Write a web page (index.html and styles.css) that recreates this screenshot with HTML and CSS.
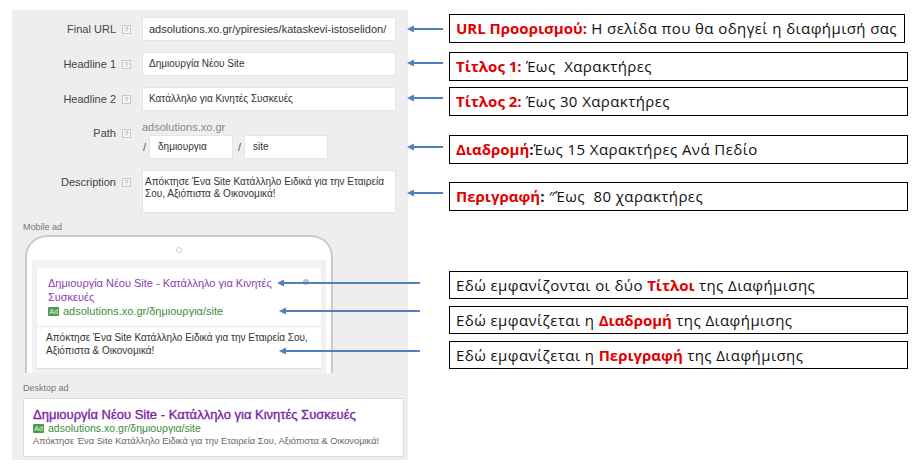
FILE: index.html
```html
<!DOCTYPE html>
<html lang="el">
<head>
<meta charset="utf-8">
<title>Expanded text ad</title>
<link rel="stylesheet" href="styles.css">
</head>
<body>
<div class="page">
  <section class="editor">
    <div class="row">
      <div class="lbl">Final URL</div><span class="help">?</span>
      <div class="field url">adsolutions.xo.gr/ypiresies/kataskevi-istoselidon/</div>
    </div>
    <div class="row">
      <div class="lbl">Headline 1</div><span class="help">?</span>
      <div class="field">Δημιουργία Νέου Site</div>
    </div>
    <div class="row">
      <div class="lbl">Headline 2</div><span class="help">?</span>
      <div class="field">Κατάλληλο για Κινητές Συσκευές</div>
    </div>
    <div class="row row-path">
      <div class="lbl">Path</div><span class="help">?</span>
      <div class="path">
        <div class="domain">adsolutions.xo.gr</div>
        <div class="path-parts">
          <span class="slash">/</span>
          <div class="field part">δημιουργια</div>
          <span class="slash slash-2">/</span>
          <div class="field part">site</div>
        </div>
      </div>
    </div>
    <div class="row">
      <div class="lbl">Description</div><span class="help">?</span>
      <div class="field area">Απόκτησε Ένα Site Κατάλληλο Ειδικά για την Εταιρεία Σου, Αξιόπιστα &amp; Οικονομικά!</div>
    </div>

    <div class="sub">Mobile ad</div>
    <div class="phone">
      <div class="camera"></div>
      <div class="screen">
        <div class="m-card">
          <div class="m-top">
            <div class="m-head">
              <div class="m-title">Δημιουργία Νέου Site - Κατάλληλο για Κινητές Συσκευές</div>
              <span class="info"></span>
            </div>
            <div class="ad-url"><span class="badge">Ad</span>adsolutions.xo.gr/δημιουργια/site</div>
          </div>
          <div class="m-desc">Απόκτησε Ένα Site Κατάλληλο Ειδικά για την Εταιρεία Σου, Αξιόπιστα &amp; Οικονομικά!</div>
        </div>
      </div>
    </div>

    <div class="sub sub-desktop">Desktop ad</div>
    <div class="d-card">
      <div class="d-title">Δημιουργία Νέου Site - Κατάλληλο για Κινητές Συσκευές</div>
      <div class="ad-url d-url"><span class="badge">Ad</span>adsolutions.xo.gr/δημιουργια/site</div>
      <div class="d-desc">Απόκτησε Ένα Site Κατάλληλο Ειδικά για την Εταιρεία Σου, Αξιόπιστα &amp; Οικονομικά!</div>
    </div>
  </section>

  <aside class="notes">
    <div class="note note-first"><b>URL Προορισμού:</b> Η σελίδα που θα οδηγεί η διαφήμισή σας</div>
    <div class="note gap-9"><b>Τίτλος 1:</b> Έως&nbsp; Χαρακτήρες</div>
    <div class="note gap-6"><b>Τίτλος 2:</b> Έως 30 Χαρακτήρες</div>
    <div class="note gap-19"><b>Διαδρομή</b><b class="ink">:</b>Έως 15 Χαρακτήρες Ανά Πεδίο</div>
    <div class="note gap-18"><b>Περιγραφή</b><b class="ink">:</b> ″Έως&nbsp; 80 χαρακτήρες</div>
    <div class="note gap-60">Εδώ εμφανίζονται οι δύο <b>Τίτλοι</b> της Διαφήμισης</div>
    <div class="note gap-7">Εδώ εμφανίζεται η <b>Διαδρομή</b> της Διαφήμισης</div>
    <div class="note gap-7">Εδώ εμφανίζεται η <b>Περιγραφή</b> της Διαφήμισης</div>
  </aside>

  <svg class="arrows" viewBox="0 0 920 468" aria-hidden="true">
    <g stroke="#4f81bd" stroke-width="2" fill="none">
      <path d="M412 29H443M412 63H443M412 98H443M412 147H443M412 193H443"/>
      <path d="M282 283H420M284 311H420M284 351H420"/>
    </g>
    <g fill="#4f81bd">
      <path d="M407 29l7-3.5v7z"/>
      <path d="M407 63l7-3.5v7z"/>
      <path d="M407 98l7-3.5v7z"/>
      <path d="M407 147l7-3.5v7z"/>
      <path d="M407 193l7-3.5v7z"/>
      <path d="M277 283l7-3.5v7z"/>
      <path d="M279 311l7-3.5v7z"/>
      <path d="M279 351l7-3.5v7z"/>
    </g>
  </svg>
</div>
</body>
</html>
```

FILE: styles.css
```css
body {
  margin: 0;
  background: #ffffff;
  font-family: "Liberation Sans", Arial, sans-serif;
}

.page {
  position: relative;
  width: 920px;
  height: 468px;
  display: flex;
  align-items: flex-start;
}

/* ---------- ad editor panel ---------- */
.editor {
  margin: 10px 0 0 12px;
  width: 396px;
  height: 450px;
  box-sizing: border-box;
  padding-top: 7px;
  background: #eeeeee;
  display: flex;
  flex-direction: column;
}

.row {
  display: flex;
  align-items: flex-start;
  margin-bottom: 11px;
}
.row-path { margin-top: -1px; }

.lbl {
  width: 104px;
  margin-right: 2px;
  text-align: right;
  font-size: 11px;
  line-height: 24px;
  color: #444444;
}

.help {
  flex: none;
  width: 9px;
  height: 9px;
  box-sizing: border-box;
  margin: 8px 11px 0 4px;
  border: 1px solid #c9c9c9;
  background: #f5f5f5;
  color: #9a9a9a;
  font-size: 7px;
  line-height: 7px;
  text-align: center;
}

.field {
  width: 254px;
  height: 24px;
  box-sizing: border-box;
  padding: 0 6px;
  background: #ffffff;
  border: 1px solid #e4e4e4;
  font-size: 10px;
  line-height: 22px;
  color: #333333;
  white-space: nowrap;
  overflow: hidden;
}
.field.url { font-size: 11px; }

.path { display: flex; flex-direction: column; }
.domain {
  font-size: 11px;
  line-height: 13px;
  color: #8a8a8a;
  margin-bottom: 1px;
}
.path-parts { display: flex; align-items: center; }
.slash {
  width: 6px;
  padding-left: 1px;
  font-size: 11px;
  color: #555555;
}
.slash-2 { width: 6px; padding-left: 5px; }
.field.part { width: 84px; padding: 0 8px; }

.field.area {
  height: 43px;
  padding: 5px 2px 0;
  line-height: 12px;
  white-space: normal;
}

.sub {
  margin: -2px 0 0 11px;
  font-size: 9px;
  line-height: 10px;
  color: #777777;
}
.sub-desktop { margin-top: 10px; }

/* ---------- mobile preview ---------- */
.phone {
  margin: 3px 0 0 13px;
  width: 308px;
  height: 138px;
  box-sizing: border-box;
  border: 2px solid #cacaca;
  border-bottom: none;
  border-radius: 22px 22px 0 0;
  background: #ffffff;
  overflow: hidden;
}

.camera {
  width: 6px;
  height: 6px;
  box-sizing: border-box;
  margin: 10px auto 7px;
  border: 1px solid #cfcfcf;
  border-radius: 50%;
}

.screen {
  margin: 0 5px;
  padding: 8px 5px 5px;
  background: #f1f1f1;
}

.m-card {
  background: #ffffff;
  box-shadow: 0 1px 1px rgba(0, 0, 0, 0.08);
}

.m-top {
  padding: 8px 11px 8px 11px;
  border-bottom: 1px solid #e9e9e9;
}

.m-head { display: flex; align-items: flex-start; justify-content: space-between; }

.m-title {
  width: 240px;
  font-size: 11px;
  line-height: 14px;
  color: #8b3db5;
}

.info {
  flex: none;
  width: 6px;
  height: 6px;
  margin: 3px 1px 0 0;
  border-radius: 50%;
  background: #bdbdbd;
}

.ad-url {
  display: flex;
  align-items: center;
  font-size: 11px;
  line-height: 14px;
  color: #3d8b3d;
}

.badge {
  display: inline-block;
  width: 11px;
  height: 9px;
  margin-right: 4px;
  border-radius: 1px;
  background: #4c9a4c;
  color: #e9f5e9;
  font-size: 7px;
  line-height: 9px;
  text-align: center;
}

.m-desc {
  padding: 4px 4px 11px 9px;
  font-size: 10px;
  line-height: 13px;
  color: #333333;
}

/* ---------- desktop preview ---------- */
.d-card {
  margin: 5px 0 0 11px;
  width: 381px;
  height: 59px;
  box-sizing: border-box;
  padding: 8px 9px 0;
  background: #ffffff;
  border: 1px solid #dedede;
}

.d-title {
  font-size: 13px;
  line-height: 15px;
  color: #7a24a6;
  -webkit-text-stroke: 0.35px #7a24a6;
  white-space: nowrap;
}

.d-url { line-height: 13px; font-size: 10.5px; }

.d-desc {
  font-size: 9.3px;
  line-height: 12px;
  color: #666666;
  white-space: nowrap;
}

/* ---------- explanation boxes ---------- */
.notes {
  margin-left: 41px;
  padding-top: 14px;
  display: flex;
  flex-direction: column;
}

.note {
  width: 459px;
  height: 29px;
  box-sizing: border-box;
  padding-left: 6px;
  border: 1px solid #000000;
  background: #ffffff;
  font-family: "Open Sans", "Noto Sans", sans-serif;
  font-size: 15px;
  line-height: 27px;
  letter-spacing: 0.42px;
  color: #111111;
  white-space: nowrap;
}
.note b { color: #e00000; font-weight: 700; letter-spacing: 0; }
.note b.ink { color: #111111; }
.note-first { width: 456px; margin-left: 0; }

.gap-6 { margin-top: 6px; }
.gap-7 { margin-top: 7px; height: 28px; line-height: 26px; }
.gap-9 { margin-top: 9px; }
.gap-18 { margin-top: 18px; }
.gap-19 { margin-top: 19px; }
.gap-60 { margin-top: 60px; height: 28px; line-height: 26px; }

/* connector arrows drawn over both columns */
.arrows {
  position: absolute;
  left: 0;
  top: 0;
  width: 920px;
  height: 468px;
  pointer-events: none;
}
```
